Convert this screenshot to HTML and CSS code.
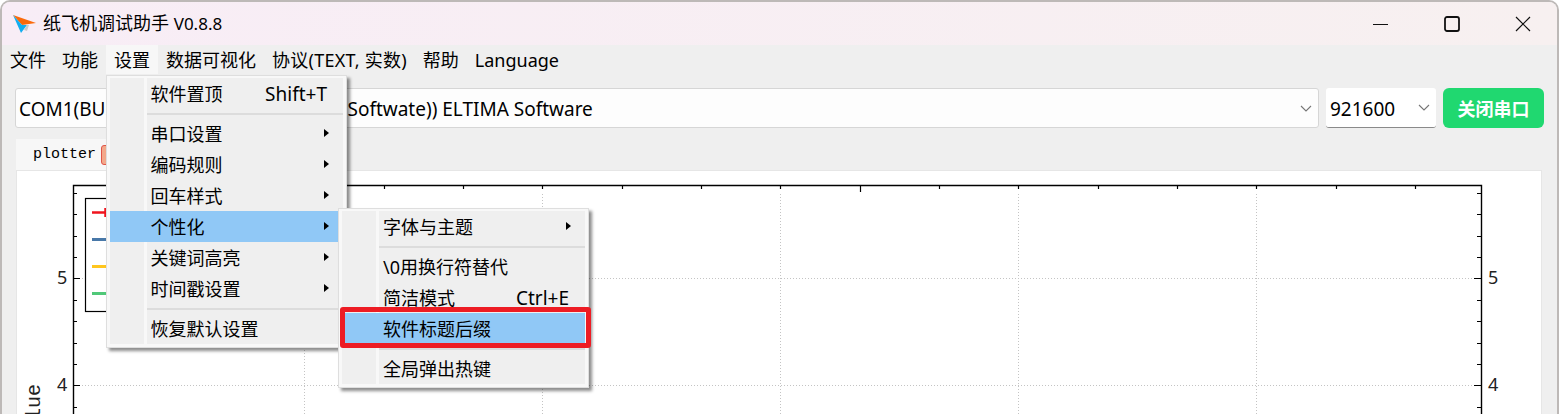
FILE: index.html
```html
<!DOCTYPE html>
<html lang="zh-CN">
<head>
  <meta charset="UTF-8" />
  <title>纸飞机调试助手</title>
  <link rel="stylesheet" href="styles.css">
</head>
<body>

  <div class="window">
    <!-- Title bar -->
    <div class="titlebar">
      <svg class="logo" viewBox="0 0 26 20" width="26" height="20">
        <path d="M1 0 L24 8 L10 10 Z" fill="#fb6a0a"/>
        <path d="M1 0 L10 10 L15 10 L9 18 Z" fill="#12aef0"/>
        <path d="M15 10 L17 10 L15 16 L12 15 Z" fill="#c9c9c9"/>
      </svg>
      <span class="app-title">纸飞机调试助手 <span class="version">V0.8.8</span></span>
      <div class="win-controls">
        <svg class="win-btn" viewBox="0 0 16 16" width="16" height="16"><path d="M0 8.5 H15" stroke="#111" fill="none"/></svg>
        <svg class="win-btn" viewBox="0 0 16 16" width="16" height="16"><rect x="1" y="1" width="14" height="14" rx="2" stroke="#111" stroke-width="1.8" fill="none"/></svg>
        <svg class="win-btn" viewBox="0 0 16 16" width="16" height="16"><path d="M1 1 L15 15 M15 1 L1 15" stroke="#111" stroke-width="1.2" fill="none"/></svg>
      </div>
    </div>

    <!-- Menu bar -->
    <div class="menubar">
      <span class="menubar-item">文件</span>
      <span class="menubar-item">功能</span>
      <span class="menubar-item open">设置</span>
      <span class="menubar-item">数据可视化</span>
      <span class="menubar-item wide">协议(TEXT, 实数)</span>
      <span class="menubar-item">帮助</span>
      <span class="menubar-item">Language</span>
    </div>

    <!-- Port selection -->
    <div class="toolbar">
      <div class="combo port">
        <span>COM1(BUS Virtual Serial Port (Eltima Softwate)) ELTIMA Software</span>
        <svg class="chevron" viewBox="0 0 12 7" width="12" height="7"><path d="M1 1 L6 6 L11 1" stroke="#777" stroke-width="1.1" fill="none"/></svg>
      </div>
      <div class="combo baud">
        <span>921600</span>
        <svg class="chevron" viewBox="0 0 12 7" width="12" height="7"><path d="M1 1 L6 6 L11 1" stroke="#777" stroke-width="1.1" fill="none"/></svg>
      </div>
      <button class="close-port">关闭串口</button>
    </div>

    <!-- Tabs -->
    <div class="tabbar">
      <div class="tab">plotter<span class="tab-close"></span></div>
    </div>

    <!-- Plot -->
    <div class="panel">
      <svg class="plot" viewBox="16 170 1525 244" width="1525" height="244">
        <path class="grid" d="M304.5 194 V414 M542.5 194 V414 M780.5 194 V414 M1018.5 194 V414 M1256.5 194 V414 M82 278.5 H1475 M82 385.5 H1475"/>
        <path class="axis" d="M73.5 414 V185.5 H1481.5 V414"/>
        <path class="tick" d="M146.5 185 v4 M225.5 185 v4 M304.5 185 v4 M384.5 185 v4 M463.5 185 v4 M542.5 185 v4 M622.5 185 v4 M701.5 185 v4 M780.5 185 v4 M860.5 185 v7 M939.5 185 v4 M1018.5 185 v4 M1098.5 185 v4 M1177.5 185 v4 M1256.5 185 v4 M1336.5 185 v4 M1415.5 185 v4"/>
        <path class="tick" d="M73 193.5 h4 M73 214.5 h4 M73 236.5 h4 M73 257.5 h4 M73 278.5 h7 M73 300.5 h4 M73 321.5 h4 M73 343.5 h4 M73 364.5 h4 M73 385.5 h7 M73 407.5 h4"/>
        <path class="tick" d="M1481 193.5 h-4 M1481 214.5 h-4 M1481 236.5 h-4 M1481 257.5 h-4 M1481 278.5 h-7 M1481 300.5 h-4 M1481 321.5 h-4 M1481 343.5 h-4 M1481 364.5 h-4 M1481 385.5 h-7 M1481 407.5 h-4"/>
        <text class="tick-label" x="57" y="284">5</text>
        <text class="tick-label" x="57" y="391">4</text>
        <text class="tick-label" x="1488" y="284">5</text>
        <text class="tick-label" x="1488" y="391">4</text>
        <text class="axis-title" transform="translate(40 384) rotate(-90)" text-anchor="end">Value</text>
        <!-- Legend -->
        <rect class="legend" x="85.5" y="198.5" width="120" height="113"/>
        <path d="M92 212.5 H140 M105.5 208 V217" stroke="#f0141e" stroke-width="2.5" fill="none"/>
        <path d="M92 239.5 H140" stroke="#4878a8" stroke-width="3" fill="none"/>
        <path d="M92 266.5 H140" stroke="#ffc61e" stroke-width="3" fill="none"/>
        <path d="M92 293.5 H140" stroke="#50c878" stroke-width="3" fill="none"/>
      </svg>
    </div>

    <!-- Settings menu -->
    <div class="menu settings-menu">
      <div class="menu-list">
        <div class="menu-item"><span>软件置顶</span><span class="shortcut">Shift+T</span></div>
        <div class="menu-sep"></div>
        <div class="menu-item sub">串口设置</div>
        <div class="menu-item sub">编码规则</div>
        <div class="menu-item sub">回车样式</div>
        <div class="menu-item sub active">个性化</div>
        <div class="menu-item sub">关键词高亮</div>
        <div class="menu-item sub">时间戳设置</div>
        <div class="menu-sep"></div>
        <div class="menu-item">恢复默认设置</div>
      </div>
    </div>

    <!-- Personalise submenu -->
    <div class="menu personal-menu">
      <div class="menu-list">
        <div class="menu-item sub">字体与主题</div>
        <div class="menu-sep"></div>
        <div class="menu-item">\0用换行符替代</div>
        <div class="menu-item"><span>简洁模式</span><span class="shortcut">Ctrl+E</span></div>
        <div class="menu-item active">软件标题后缀</div>
        <div class="menu-sep"></div>
        <div class="menu-item">全局弹出热键</div>
      </div>
    </div>

    <!-- Red annotation box -->
    <div class="callout"></div>
  </div>

</body>
</html>
```

FILE: styles.css
```css
html, body {
  margin: 0;
  height: 414px;
  overflow: hidden;
  background: #fff;
}

body {
  font-family: "Noto Sans", "Noto Sans CJK SC", sans-serif;
  font-size: 18px;
  color: #000;
}

.window {
  position: relative;
  width: 1559px;
  height: 414px;
  box-sizing: border-box;
  background: #efefef;
  border: 2px solid #bdb9b7;
  border-bottom: none;
  border-radius: 10px 10px 0 0;
  overflow: hidden;
}

.titlebar {
  display: flex;
  align-items: center;
  height: 43px;
  padding-left: 10px;
  background: linear-gradient(to right, #f8edf6, #f7f0f0);
}

.logo {
  margin-right: 5px;
  margin-top: 2px;
}

.app-title {
  line-height: 43px;
}

.version {
  font-size: 17px;
}

.win-controls {
  display: flex;
  gap: 55px;
  margin-left: auto;
  margin-right: 26px;
}

.win-btn {
  display: block;
}

.menubar {
  display: flex;
  height: 29px;
}

.menubar-item {
  padding: 1px 8px 0;
  line-height: 29px;
  white-space: nowrap;
}

.menubar-item.open {
  background: #f7f7f7;
}

.menubar-item.wide {
  letter-spacing: 0.25px;
}

.toolbar {
  display: flex;
  gap: 7px;
  padding: 14px 13px 11px 13px;
}

.combo {
  display: flex;
  align-items: center;
  justify-content: space-between;
  box-sizing: border-box;
  height: 40px;
  padding: 0 6px 0 3px;
  background: #fdfdfd;
  border: 1px solid #d6d6d6;
  border-radius: 3px;
  font-size: 19px;
  white-space: nowrap;
}

.combo span {
  padding-top: 2px;
}

.port {
  flex: 1;
}

.baud {
  width: 110px;
  padding-left: 4px;
  background: #fff;
  border: none;
  border-bottom: 1px solid #8a8a8a;
}

.chevron {
  display: block;
}

.close-port {
  width: 101px;
  height: 40px;
  padding: 0;
  background: #20d870;
  color: #fff;
  border: none;
  border-radius: 6px;
  font: bold 18px "Noto Sans CJK SC", sans-serif;
}

.tabbar {
  display: flex;
  height: 31px;
  padding-left: 14px;
}

.tab {
  display: flex;
  align-items: center;
  width: 110px;
  box-sizing: border-box;
  padding-left: 17px;
  background: #f7f7f7;
  font: 15px "Liberation Mono", monospace;
}

.tab-close {
  width: 9px;
  height: 18px;
  margin-left: 5px;
  background: #f3a98c;
  border: 1px solid #e0564a;
  border-radius: 3px;
}

.panel {
  margin: 0 15px 0 14px;
  height: 244px;
  background: #fff;
  box-shadow: inset 0 1px 0 #e6e6e6, inset 1px 0 0 #e6e6e6, inset -1px 0 0 #e6e6e6;
}

.plot {
  display: block;
}

.grid {
  fill: none;
  stroke: #c4c4c4;
  stroke-dasharray: 1 2;
}

.axis {
  fill: none;
  stroke: #000;
  stroke-width: 1.4;
}

.tick {
  fill: none;
  stroke: #000;
  stroke-width: 1.2;
}

.tick-label {
  font-size: 18px;
  fill: #222;
}

.axis-title {
  font-family: "Liberation Mono", monospace;
  font-size: 20px;
  fill: #222;
}

.legend {
  fill: #fff;
  stroke: #000;
  stroke-width: 1.2;
}

/* Popup menus */
.menu {
  position: absolute;
  box-sizing: border-box;
  padding: 2px 3px 3px;
  background: #f8f8f8;
  border: 1px solid #dedede;
  box-shadow: 3px 3px 3px rgba(0, 0, 0, 0.45);
}

.settings-menu {
  left: 104px;
  top: 73px;
  width: 241px;
  height: 273px;
}

.personal-menu {
  left: 336px;
  top: 206px;
  width: 251px;
  height: 180px;
}

.menu-list {
  background: linear-gradient(to right, #efefef 34px, #f8f8f8 34px, #f8f8f8 37px, #efefef 37px);
}

.menu-item {
  position: relative;
  display: flex;
  justify-content: space-between;
  height: 31px;
  padding: 1px 16px 0 41px;
  box-sizing: border-box;
  line-height: 31px;
  white-space: nowrap;
}

.settings-menu .menu-item {
  padding-left: 40.5px;
}

.shortcut {
  font-size: 19px;
}

.menu-item.active {
  background: #90c8f6;
}

.menu-item.sub::after {
  content: "";
  position: absolute;
  right: 14px;
  top: 11px;
  border-left: 5px solid #000;
  border-top: 4.5px solid transparent;
  border-bottom: 4.5px solid transparent;
}

.menu-sep {
  height: 9px;
  margin-left: 37px;
  background: linear-gradient(#dcdcdc, #dcdcdc) center / 100% 2px no-repeat;
}

.callout {
  position: absolute;
  left: 338px;
  top: 305px;
  width: 251px;
  height: 41px;
  box-sizing: border-box;
  border: 5px solid #ed1c24;
  border-radius: 3px;
}
```
